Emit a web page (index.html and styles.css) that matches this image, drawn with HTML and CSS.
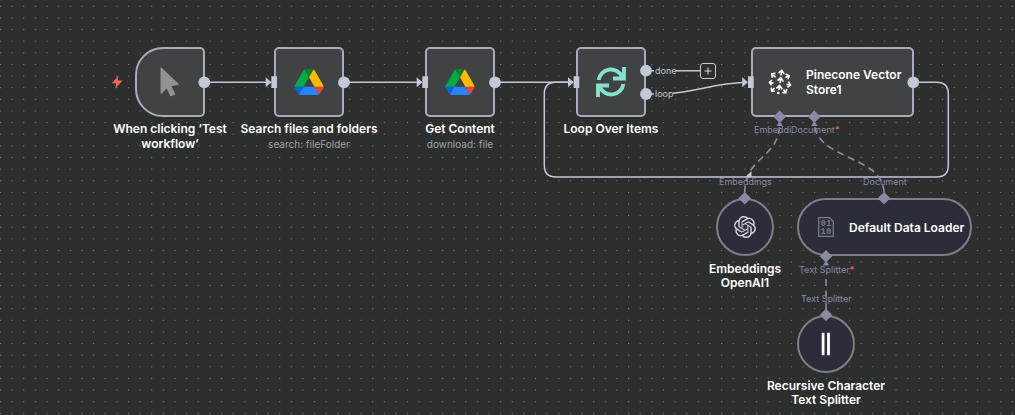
FILE: index.html
```html
<!DOCTYPE html>
<html lang="en">
<head>
<meta charset="utf-8">
<meta name="viewport" content="width=device-width, initial-scale=1">
<title>Workflow</title>
<link rel="stylesheet" href="styles.css">
</head>
<body>
<main class="canvas">
  <svg class="layer" aria-hidden="true">
    <defs>
      <pattern id="dots" x="0" y="5.8" width="11.63" height="11.63" patternUnits="userSpaceOnUse">
        <circle cx="0.6" cy="0.5" r="0.58" fill="#8a8b8b"/>
      </pattern>
    </defs>
    <rect width="100%" height="100%" fill="url(#dots)"/>
  </svg>

  <svg class="layer" aria-hidden="true">
    <g class="edge">
      <path d="M204 82.3H268M344 82.3H419M495 82.3H570"/>
      <path d="M646 70.7H654M676 70.7H701"/>
      <path d="M646 94H654M673 93.3C698 91 716 83.500 745 82.300"/>
      <path d="M913 82.300H936.500Q948.300 82.300 948.300 94V165.500Q948.300 177 936.500 177H556Q544.300 177 544.300 165.500V94Q544.300 82.300 556 82.300H570"/>
    </g>
    <g class="edge-sub">
      <path d="M779.700 122C779.700 160 744.700 155 744.700 193" stroke-dashoffset="-5"/>
      <path d="M814.300 122C814.300 160 884 155 884 193" stroke-dashoffset="-5"/>
      <path d="M826 279V310" />
    </g>
    <path class="port-fill" d="M745 177.500L751.500 171V177.500Z"/>
  </svg>

  <section class="node trigger">
    <div class="box box-trigger">
      <svg width="20" height="30" viewBox="0 0 20 30"><path d="M1.200 1.200L18 17.300L10.500 18.600L14.500 27L10.800 28.600L7 20.300L1.200 26Z" fill="#919197" stroke="#919197" stroke-width="1.400" stroke-linejoin="round"/></svg>
    </div>
    <h2 class="title">When clicking ‘Test workflow’</h2>
  </section>

  <section class="node search">
    <div class="box">
      <svg width="30" height="26" viewBox="0 0 87.3 78"><path d="M6.600 66.850l3.850 6.650c.8 1.400 1.950 2.500 3.300 3.300l13.750-23.800H0c0 1.550.4 3.100 1.200 4.500z" fill="#0066da"/><path d="M43.650 25L29.900 1.200c-1.350.8-2.500 1.900-3.300 3.300l-25.400 44a9.060 9.060 0 0 0-1.200 4.500h27.500z" fill="#00ac47"/><path d="M73.550 76.800c1.350-.8 2.500-1.900 3.300-3.300l1.600-2.750 7.650-13.250c.8-1.400 1.200-2.950 1.200-4.500H59.800l5.850 11.500z" fill="#ea4335"/><path d="M43.650 25L57.400 1.200C56.050.4 54.500 0 52.900 0H34.400c-1.600 0-3.150.450-4.500 1.200z" fill="#00832d"/><path d="M59.800 53H27.500L13.750 76.800c1.350.8 2.900 1.200 4.500 1.200h50.800c1.600 0 3.150-.450 4.500-1.200z" fill="#2684fc"/><path d="M73.400 26.500l-12.700-22c-.8-1.400-1.950-2.500-3.300-3.300L43.650 25l16.150 28h27.450c0-1.550-.4-3.100-1.200-4.500z" fill="#ffba00"/></svg>
    </div>
    <h2 class="title">Search files and folders</h2>
    <p class="subtitle">search: fileFolder</p>
  </section>

  <section class="node content">
    <div class="box">
      <svg width="30" height="26" viewBox="0 0 87.3 78"><path d="M6.600 66.850l3.850 6.650c.8 1.400 1.950 2.500 3.300 3.300l13.750-23.800H0c0 1.550.4 3.100 1.200 4.500z" fill="#0066da"/><path d="M43.650 25L29.900 1.200c-1.350.8-2.500 1.900-3.300 3.300l-25.400 44a9.060 9.060 0 0 0-1.200 4.500h27.500z" fill="#00ac47"/><path d="M73.550 76.800c1.350-.8 2.500-1.900 3.300-3.300l1.600-2.750 7.650-13.250c.8-1.400 1.200-2.950 1.200-4.500H59.800l5.850 11.500z" fill="#ea4335"/><path d="M43.650 25L57.400 1.200C56.050.4 54.500 0 52.900 0H34.400c-1.600 0-3.150.450-4.500 1.200z" fill="#00832d"/><path d="M59.800 53H27.500L13.750 76.800c1.350.8 2.900 1.200 4.500 1.200h50.800c1.600 0 3.150-.450 4.500-1.200z" fill="#2684fc"/><path d="M73.400 26.500l-12.700-22c-.8-1.400-1.950-2.500-3.300-3.300L43.650 25l16.150 28h27.450c0-1.550-.4-3.100-1.200-4.500z" fill="#ffba00"/></svg>
    </div>
    <h2 class="title">Get Content</h2>
    <p class="subtitle">download: file</p>
  </section>

  <section class="node loop">
    <div class="box">
      <svg width="30" height="30" viewBox="0 0 30 30" fill="none" stroke="#87e0cd" stroke-width="3.900"><g id="half"><path d="M2.600 13A12.300 12.300 0 0 1 26 9.800"/><path d="M28 0V11.500H17"/></g><use href="#half" transform="rotate(180 15 15)"/></svg>
    </div>
    <h2 class="title">Loop Over Items</h2>
  </section>

  <section class="node pinecone">
    <div class="box box-wide">
      <svg width="24" height="26" viewBox="0 0 24 26" fill="none" stroke="#fff" stroke-width="1.600"><path d="M13 6.500L13.600 2M10.500 4L13.700 1.400L16.200 5M12 14L12.700 9.500M9.500 11.700L12.800 8.800L15.300 12.600M11 21L11.600 17M8.400 19.400L11.700 16.400L14.200 20.200"/><path d="M7.500 8L4.200 5.500M7.500 4.300L3.800 5L4.300 8.600M5.500 14.300L1.800 13.500M4 11L1.500 13.400L3.600 16.400M6.500 19L4 21.700M3.300 18.600L3.600 22L7 22.200M17.500 8.500L20.800 7M17.500 5L21.200 6.800L20 10.300M18.500 15.400L22 16M20.500 12.700L22.500 16L19.400 18.300M15.500 20.500L17.500 23.500M18.700 20L17.800 23.800L14 23.500"/><circle cx="10.300" cy="24" r="1.300" fill="#fff" stroke="none"/></svg>
      <h2 class="title inside">Pinecone Vector Store1</h2>
    </div>
  </section>

  <section class="node embeddings">
    <div class="box box-round">
      <svg width="22" height="22" viewBox="0 0 24 24" fill="#d3d3da"><path d="M22.2819 9.8211a5.9847 5.9847 0 0 0-.5157-4.9108 6.0462 6.0462 0 0 0-6.5098-2.9A6.0651 6.0651 0 0 0 4.9807 4.1818a5.9847 5.9847 0 0 0-3.9977 2.9 6.0462 6.0462 0 0 0 .7427 7.0966 5.98 5.98 0 0 0 .511 4.9107 6.051 6.051 0 0 0 6.5146 2.9001A5.9847 5.9847 0 0 0 13.2599 24a6.0557 6.0557 0 0 0 5.7718-4.2058 5.9894 5.9894 0 0 0 3.9977-2.9001 6.0557 6.0557 0 0 0-.7475-7.0729zm-9.022 12.6081a4.4755 4.4755 0 0 1-2.8764-1.0408l.1419-.0804 4.7783-2.7582a.7948.7948 0 0 0 .3927-.6813v-6.7369l2.02 1.1686a.071.071 0 0 1 .038.052v5.5826a4.504 4.504 0 0 1-4.4945 4.4944zm-9.6607-4.1254a4.4708 4.4708 0 0 1-.5346-3.0137l.142.0852 4.783 2.7582a.7712.7712 0 0 0 .7806 0l5.8428-3.3685v2.3324a.0804.0804 0 0 1-.0332.0615L9.74 19.9502a4.4992 4.4992 0 0 1-6.1408-1.6464zM2.3408 7.8956a4.485 4.485 0 0 1 2.3655-1.9728V11.6a.7664.7664 0 0 0 .3879.6765l5.8144 3.3543-2.0201 1.1685a.0757.0757 0 0 1-.071 0l-4.8303-2.7865A4.504 4.504 0 0 1 2.3408 7.872zm16.5963 3.8558L13.1038 8.364 15.1192 7.2a.0757.0757 0 0 1 .071 0l4.8303 2.7913a4.4944 4.4944 0 0 1-.6765 8.1042v-5.6772a.79.79 0 0 0-.407-.667zm2.0107-3.0231l-.142-.0852-4.7735-2.7818a.7759.7759 0 0 0-.7854 0L9.409 9.2297V6.8974a.0662.0662 0 0 1 .0284-.0615l4.8303-2.7866a4.4992 4.4992 0 0 1 6.6802 4.66zM8.3065 12.863l-2.02-1.1638a.0804.0804 0 0 1-.038-.0567V6.0742a4.4992 4.4992 0 0 1 7.3757-3.4537l-.142.0805L8.704 5.459a.7948.7948 0 0 0-.3927.6813zm1.0976-2.3654l2.602-1.4998 2.6069 1.4998v2.9994l-2.5974 1.4997-2.6067-1.4997Z"/></svg>
    </div>
    <h2 class="title">Embeddings OpenAI1</h2>
  </section>

  <section class="node loader">
    <div class="box box-pill">
      <svg width="16" height="20" viewBox="0 0 16 20"><path d="M.7.700H11.500L15.300 4.500V19.300H.7Z" fill="none" stroke="#7b7b85" stroke-width="1.300"/><text class="bits" x="8" y="9" text-anchor="middle">01</text><text class="bits" x="8" y="17" text-anchor="middle">10</text></svg>
      <h2 class="title inside">Default Data Loader</h2>
    </div>
  </section>

  <section class="node splitter">
    <div class="box box-round">
      <svg width="10" height="24" viewBox="0 0 10 24"><path d="M.7.800H3.500V23.200H.7ZM6.100.800H8.900V23.200H6.100Z" fill="#fff"/></svg>
    </div>
    <h2 class="title">Recursive Character Text Splitter</h2>
  </section>

  <svg class="layer" aria-hidden="true">
    <path d="M118.500 75.500L111.800 83.300H116.300L115.200 88.500L122.600 80.400H117.700Z" fill="#f06a5c"/>
    <g class="port-fill">
      <circle cx="204.300" cy="82.300" r="5.900"/><circle cx="344" cy="82.300" r="5.900"/><circle cx="495" cy="82.300" r="5.900"/><circle cx="646" cy="70.700" r="5.900"/><circle cx="646" cy="94" r="5.900"/><circle cx="913.300" cy="82.300" r="5.900"/>
      <path d="M265.700 77.300L271.500 82.300L265.700 87.300ZM271.300 76.300H277V88H271.300Z"/>
      <path d="M416.700 77.300L422.500 82.300L416.700 87.300ZM422.300 76.300H428V88H422.300Z"/>
      <path d="M568 77.300L573.800 82.300L568 87.300ZM573.600 76.300H579.300V88H573.600Z"/>
      <path d="M742.200 77.300L748 82.300L742.200 87.300ZM748 76.300H753.700V88H748Z"/>
    </g>
    <g class="port-sub">
      <path d="M779.700 110.500L786 116.800L779.700 123.100L773.400 116.800ZM779.700 121L783 126H776.400Z"/>
      <path d="M814.300 110.500L820.600 116.800L814.300 123.100L808 116.800ZM814.300 121L817.600 126H811Z"/>
      <path d="M744.700 192L751 198.300L744.700 204.600L738.400 198.300Z"/>
      <path d="M884 192L890.300 198.300L884 204.600L877.700 198.300Z"/>
      <path d="M826 250L832.300 256.300L826 262.600L819.700 256.300ZM826 260.500L829.300 265.500H822.700Z"/>
      <path d="M826 308.700L832.300 315L826 321.300L819.700 315Z"/>
    </g>
  </svg>

  <span class="label out done">done</span>
  <span class="label out looped">loop</span>
  <button class="plus" type="button" aria-label="Add node"><svg width="8" height="8" viewBox="0 0 8 8"><path d="M4 .5V7.500M.5 4H7.500" stroke="#d5d8e0"/></svg></button>
  <span class="label in-embed">Embeddings</span>
  <span class="label in-doc">Document<b>*</b></span>
  <span class="label to-embed">Embeddings</span>
  <span class="label to-doc">Document</span>
  <span class="label in-split">Text Splitter<b>*</b></span>
  <span class="label to-split">Text Splitter</span>
</main>
</body>
</html>
```
FILE: styles.css
```css
* { box-sizing: border-box; }

body {
  margin: 0;
  background: #2d2e2e;
  color: #fff;
  font-family: Inter, "Open Sans", sans-serif;
}

.canvas {
  position: relative;
  min-height: 100vh;
  overflow: hidden;
}

.layer {
  position: absolute;
  inset: 0;
  width: 100%;
  height: 100%;
  pointer-events: none;
}

.edge { fill: none; stroke: #c3c8d6; stroke-width: 1.5; }
.edge-sub { fill: none; stroke: #8d8da8; stroke-width: 1.6; stroke-dasharray: 7 4.6; }
.port-fill { fill: #c3c8d6; }
.port-sub { fill: #8a8aa6; }

/* nodes */
.node {
  position: absolute;
  width: 140px;
  display: flex;
  flex-direction: column;
  align-items: center;
}

.trigger { left: 100px; top: 47px; }
.search { left: 239px; top: 47px; }
.content { left: 390px; top: 47px; }
.loop { left: 541px; top: 47px; }
.pinecone { left: 751px; top: 47px; width: 163px; }
.embeddings { left: 675px; top: 198px; }
.loader { left: 797px; top: 198px; width: 175px; }
.splitter { left: 756px; top: 315px; }

.box {
  width: 70px;
  height: 70px;
  display: flex;
  align-items: center;
  justify-content: center;
  background: #414244;
  border: 2px solid #a9adb8;
  border-radius: 5px;
}

.box svg { flex-shrink: 0; }

.box-trigger { border-radius: 28px 5px 5px 28px; }

.box-wide {
  width: 100%;
  justify-content: flex-start;
  gap: 14px;
  padding: 0 4px 0 15px;
}

.box-round,
.box-pill {
  height: 58px;
  background: #2c2c3a;
  border-color: #7e7e83;
  border-radius: 29px;
}

.box-round { width: 58px; }

.box-pill {
  width: 100%;
  justify-content: flex-start;
  gap: 15px;
  padding-left: 19px;
}

.title {
  margin: 4px 0 0;
  font-size: 12px;
  line-height: 15px;
  font-weight: 600;
  text-align: center;
}

.trigger .title { width: 120px; }
.embeddings .title,
.splitter .title { width: 120px; margin-top: 6px; line-height: 14px; }
.embeddings .title { width: 80px; }
.title.inside { margin: 0; text-align: left; }

.subtitle {
  margin: 1px 0 0;
  font-size: 10px;
  line-height: 15px;
  color: #a0a1a8;
}

.bits {
  font: bold 9px "Liberation Mono", monospace;
  fill: #7b7b85;
}

/* connector labels */
.label {
  position: absolute;
  font-size: 9px;
  line-height: 12px;
  white-space: nowrap;
  color: #8a8aa6;
}

.label b { color: #f0575c; }
.out { color: #c3c8d6; }
.done { left: 655px; top: 65px; }
.looped { left: 655px; top: 88px; }
.in-embed { left: 754px; top: 124px; width: 37px; overflow: hidden; }
.in-doc { left: 791px; top: 124px; }
.to-embed { left: 719px; top: 176px; }
.to-doc { left: 863px; top: 176px; }
.in-split { left: 799px; top: 264px; }
.to-split { left: 801px; top: 293px; }

.plus {
  position: absolute;
  left: 700px;
  top: 63px;
  width: 16px;
  height: 16px;
  padding: 0;
  display: flex;
  align-items: center;
  justify-content: center;
  background: #2d2e2e;
  border: 1px solid #c3c8d6;
  border-radius: 3px;
}
```
